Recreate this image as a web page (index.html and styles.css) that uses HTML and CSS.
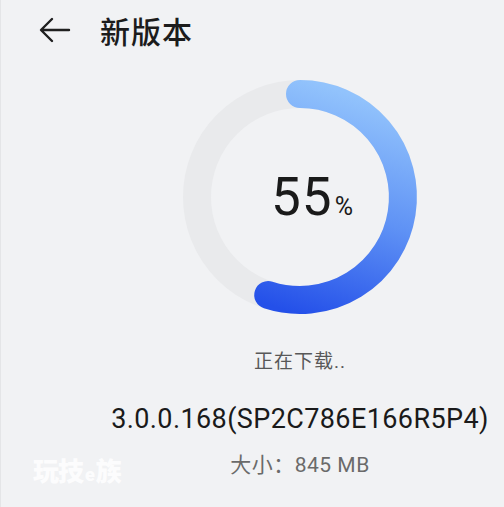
FILE: index.html
```html
<!DOCTYPE html>
<html lang="zh-CN">

<head>
  <meta charset="UTF-8">
  <meta name="viewport" content="width=device-width, initial-scale=1.0">
  <title>新版本</title>
  <link rel="stylesheet" href="styles.css">
</head>

<body>
  <div class="header">
    <svg class="back" width="32" height="26" viewBox="0 0 32 26">
      <path d="M30 13 H3 M13 2 L2 13 L13 24" fill="none" stroke="#1f1f1f" stroke-width="2.4" stroke-linecap="round" stroke-linejoin="round"/>
    </svg>
    <h1>新版本</h1>
  </div>

  <div class="main">
    <div class="ring">
      <svg width="240" height="240" viewBox="0 0 240 240">
        <defs>
          <linearGradient id="grad" gradientUnits="userSpaceOnUse" x1="165" y1="15" x2="95" y2="230">
            <stop offset="0" stop-color="#92c3fc"/>
            <stop offset="0.5" stop-color="#5f92f5"/>
            <stop offset="1" stop-color="#2450e9"/>
          </linearGradient>
        </defs>
        <circle cx="120" cy="120" r="103" fill="none" stroke="#e9eaec" stroke-width="28"/>
        <!-- 55%: arc from 12 o'clock, 198 degrees clockwise -->
        <path d="M120 17 A103 103 0 1 1 88.2 218" fill="none" stroke="url(#grad)" stroke-width="28" stroke-linecap="round"/>
      </svg>
      <div class="percent"><span class="num">55</span><span class="unit">%</span></div>
    </div>

    <div class="status">正在下载..</div>
    <div class="version">3.0.0.168(SP2C786E166R5P4)</div>
    <div class="size">大小：845 MB</div>
  </div>

  <div class="watermark">玩技<span class="e">e</span>族</div>
</body>

</html>
```

FILE: styles.css
```css
body {
  font-family: Roboto, "Noto Sans CJK SC", sans-serif;
  background-color: #f1f2f4;
  margin: 0;
  width: 504px;
  height: 507px;
  overflow: hidden;
  position: relative;
  border-left: 1px solid #e4e5e7;
  box-sizing: border-box;
}

.header {
  display: flex;
  align-items: center;
  height: 60px;
  padding-left: 38px;
  gap: 29px;
}

.back {
  display: block;
}

h1 {
  margin: 0;
  font-size: 30px;
  font-weight: 500;
  color: #1c1c1c;
  letter-spacing: 1px;
}

.main {
  display: flex;
  flex-direction: column;
  align-items: center;
  margin-left: 95px;
}

.ring {
  display: grid;
  margin-top: 17px;
}

.ring svg,
.ring .percent {
  grid-area: 1 / 1;
}

.percent {
  display: flex;
  align-items: baseline;
  justify-content: center;
  align-self: center;
  padding-left: 24px;
  color: #1a1a1a;
}

.num {
  font-size: 53px;
  letter-spacing: 1px;
}

.unit {
  font-size: 25px;
  margin-left: 2px;
}

.status {
  margin-top: 32px;
  font-size: 19px;
  line-height: 26px;
  color: #585858;
  letter-spacing: 1px;
}

.version {
  margin-top: 28px;
  font-size: 27px;
  line-height: 32px;
  letter-spacing: 0.4px;
  color: #1a1a1a;
}

.size {
  margin-top: 16px;
  font-size: 21px;
  line-height: 28px;
  letter-spacing: 0.5px;
  color: #6a6a6a;
}

.watermark {
  position: absolute;
  left: 32px;
  top: 451px;
  font-size: 26px;
  font-weight: 900;
  color: rgba(255, 255, 255, 0.85);
  letter-spacing: -1px;
}

.watermark .e {
  font-size: 18px;
  margin: 0 2px;
}
```
